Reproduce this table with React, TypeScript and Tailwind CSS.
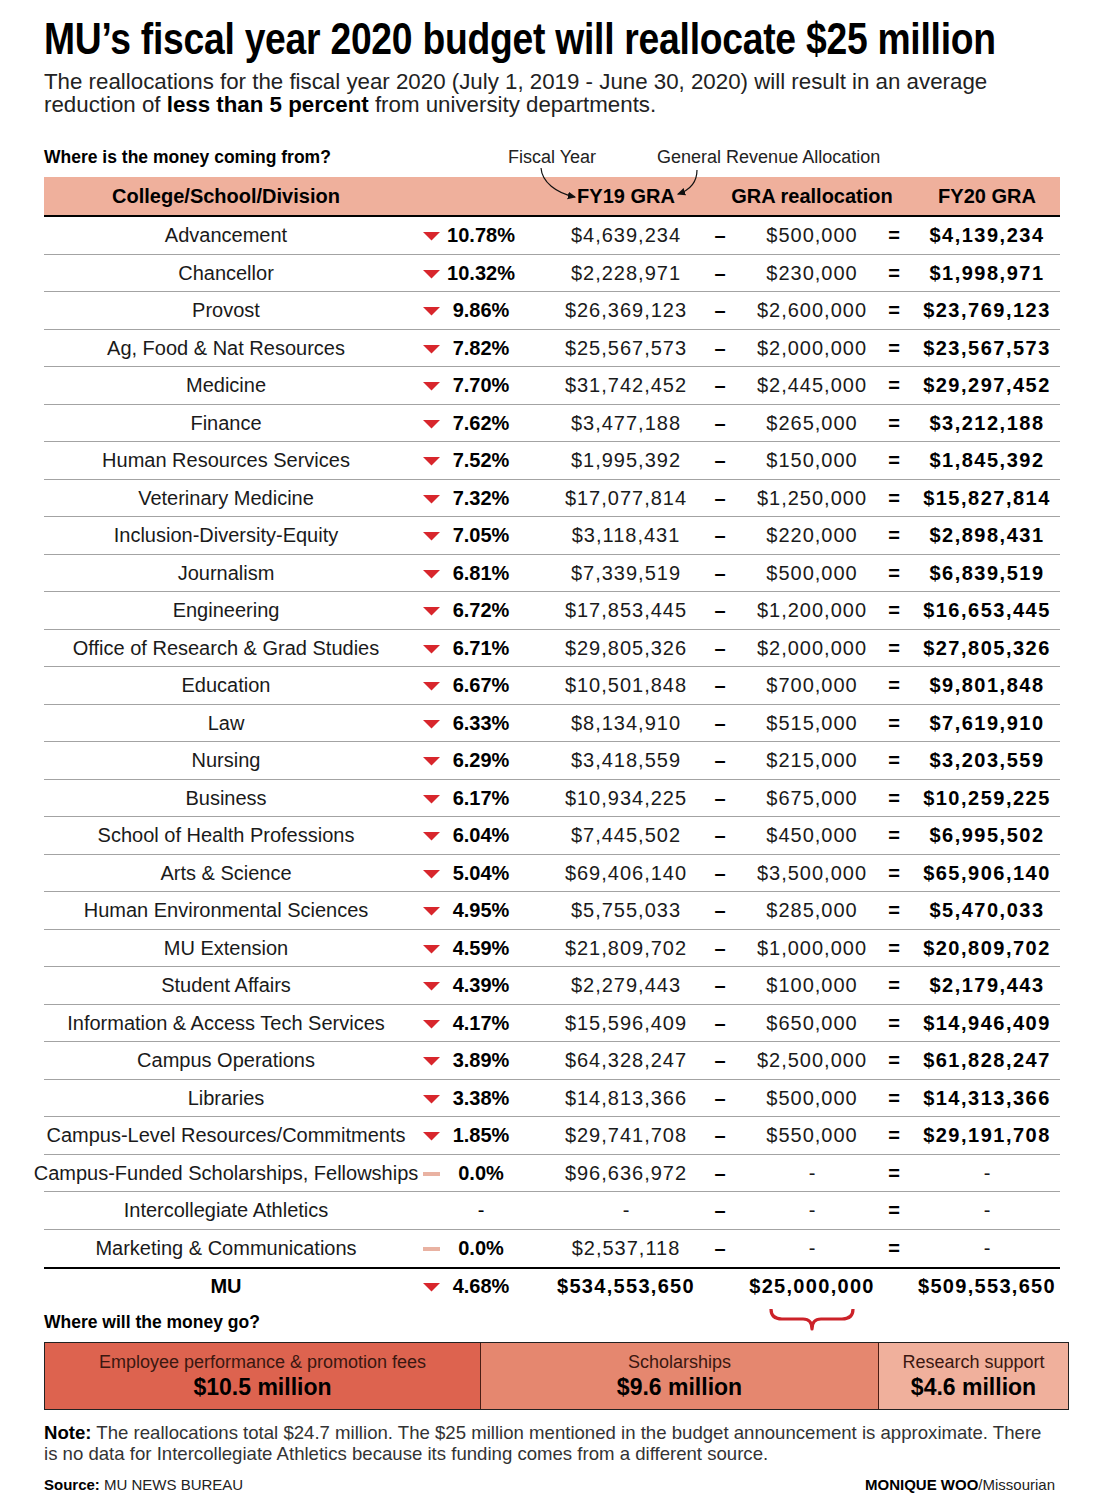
type Kind = 'down' | 'zero' | 'none';

const rows: [string, string, string, string, string, Kind][] = [
  ['Advancement', '10.78%', '$4,639,234', '$500,000', '$4,139,234', 'down'],
  ['Chancellor', '10.32%', '$2,228,971', '$230,000', '$1,998,971', 'down'],
  ['Provost', '9.86%', '$26,369,123', '$2,600,000', '$23,769,123', 'down'],
  ['Ag, Food & Nat Resources', '7.82%', '$25,567,573', '$2,000,000', '$23,567,573', 'down'],
  ['Medicine', '7.70%', '$31,742,452', '$2,445,000', '$29,297,452', 'down'],
  ['Finance', '7.62%', '$3,477,188', '$265,000', '$3,212,188', 'down'],
  ['Human Resources Services', '7.52%', '$1,995,392', '$150,000', '$1,845,392', 'down'],
  ['Veterinary Medicine', '7.32%', '$17,077,814', '$1,250,000', '$15,827,814', 'down'],
  ['Inclusion-Diversity-Equity', '7.05%', '$3,118,431', '$220,000', '$2,898,431', 'down'],
  ['Journalism', '6.81%', '$7,339,519', '$500,000', '$6,839,519', 'down'],
  ['Engineering', '6.72%', '$17,853,445', '$1,200,000', '$16,653,445', 'down'],
  ['Office of Research & Grad Studies', '6.71%', '$29,805,326', '$2,000,000', '$27,805,326', 'down'],
  ['Education', '6.67%', '$10,501,848', '$700,000', '$9,801,848', 'down'],
  ['Law', '6.33%', '$8,134,910', '$515,000', '$7,619,910', 'down'],
  ['Nursing', '6.29%', '$3,418,559', '$215,000', '$3,203,559', 'down'],
  ['Business', '6.17%', '$10,934,225', '$675,000', '$10,259,225', 'down'],
  ['School of Health Professions', '6.04%', '$7,445,502', '$450,000', '$6,995,502', 'down'],
  ['Arts & Science', '5.04%', '$69,406,140', '$3,500,000', '$65,906,140', 'down'],
  ['Human Environmental Sciences', '4.95%', '$5,755,033', '$285,000', '$5,470,033', 'down'],
  ['MU Extension', '4.59%', '$21,809,702', '$1,000,000', '$20,809,702', 'down'],
  ['Student Affairs', '4.39%', '$2,279,443', '$100,000', '$2,179,443', 'down'],
  ['Information & Access Tech Services', '4.17%', '$15,596,409', '$650,000', '$14,946,409', 'down'],
  ['Campus Operations', '3.89%', '$64,328,247', '$2,500,000', '$61,828,247', 'down'],
  ['Libraries', '3.38%', '$14,813,366', '$500,000', '$14,313,366', 'down'],
  ['Campus-Level Resources/Commitments', '1.85%', '$29,741,708', '$550,000', '$29,191,708', 'down'],
  ['Campus-Funded Scholarships, Fellowships', '0.0%', '$96,636,972', '-', '-', 'zero'],
  ['Intercollegiate Athletics', '-', '-', '-', '-', 'none'],
  ['Marketing & Communications', '0.0%', '$2,537,118', '-', '-', 'zero'],
];

const grid =
  'grid grid-cols-[364px_40px_66px_32px_160px_28px_10px_136px_28px_6px_146px]';
const cell = 'flex items-center justify-center whitespace-nowrap';

function Tri() {
  return (
    <svg width="17" height="9" viewBox="0 0 17 9" className="mt-[3px]">
      <path d="M0 0 L17 0 L8.5 8.5 Z" fill="#d8262c" />
    </svg>
  );
}

function Marker({ kind }: { kind: Kind }) {
  if (kind === 'down') return <Tri />;
  if (kind === 'zero') return <div className="mt-[2px] h-[4px] w-[17px] bg-[#e9b2a2]" />;
  return null;
}

export default function App() {
  return (
    <div
      className="h-[1512px] w-[1098px] overflow-hidden bg-white pl-[44px] text-[#1a1a1a]"
      style={{ fontFamily: '"Liberation Sans", Arial, sans-serif' }}
    >
      <div className="pt-[16px]">
        <h1 className="origin-left scale-x-[0.828] whitespace-nowrap text-[45px] font-bold leading-none tracking-[-0.3px] text-black">
          MU’s fiscal year 2020 budget will reallocate $25 million
        </h1>
      </div>
      <p className="mt-[9px] whitespace-nowrap text-[22.3px] leading-[23px] text-[#222]">
        The reallocations for the fiscal year 2020 (July 1, 2019 - June 30, 2020) will result in an average
        <br />
        reduction of <b className="font-bold text-black">less than 5 percent</b> from university departments.
      </p>

      {/* header block with annotation arrows */}
      <div className="relative mt-[31px] w-[1016px]">
        <div className="flex h-[20px] items-center whitespace-nowrap">
          <div className="w-[464px] text-[17.5px] font-bold text-black">Where is the money coming from?</div>
          <div className="text-[18px] text-[#222]">Fiscal Year</div>
          <div className="ml-[61px] text-[18px] text-[#222]">General Revenue Allocation</div>
        </div>
        <svg className="pointer-events-none absolute left-0 top-0" width="1016" height="60">
          <defs>
            <marker id="ah" markerWidth="8" markerHeight="8" refX="6" refY="4" orient="auto">
              <path d="M0 0.8 L7 4 L0 7.2 Z" fill="#111" />
            </marker>
          </defs>
          <path d="M497 21 C498 35 512 46 531 50" stroke="#111" strokeWidth="1.2" fill="none" markerEnd="url(#ah)" />
          <path d="M653 23 C653 36 646 43 634 47" stroke="#111" strokeWidth="1.2" fill="none" markerEnd="url(#ah)" />
        </svg>

        <div className={`${grid} mt-[10px] h-[40px] border-b-2 border-black bg-[#efb09c] text-[20px] font-bold text-black`}>
          <div className={cell}>College/School/Division</div>
          <div />
          <div />
          <div />
          <div className={cell}>FY19 GRA</div>
          <div />
          <div />
          <div className={cell}>GRA reallocation</div>
          <div />
          <div />
          <div className={cell}>FY20 GRA</div>
        </div>
      </div>

      {/* data rows */}
      <div className="w-[1016px] text-[20px]">
        {rows.map(([name, pct, fy19, re, fy20, kind], i) => (
          <div
            key={name}
            className={`${grid} h-[37.5px] ${i < rows.length - 1 ? 'border-b border-[#a3a3a3]' : ''}`}
          >
            <div className={cell}>{name}</div>
            <div className="flex items-center justify-end pr-[8px]">
              <Marker kind={kind} />
            </div>
            <div className={`${cell} ${pct === '-' ? 'font-normal' : 'font-bold'} text-black`}>{pct}</div>
            <div />
            <div className={`${cell} ${fy19 === '-' ? '' : 'tracking-[1px]'}`}>{fy19}</div>
            <div className={`${cell} font-bold text-black`}>–</div>
            <div />
            <div className={`${cell} ${re === '-' ? '' : 'tracking-[1px]'}`}>{re}</div>
            <div className={`${cell} font-bold text-black`}>=</div>
            <div />
            <div className={`${cell} ${fy20 === '-' ? 'font-normal' : 'font-bold tracking-[1.5px] text-black'}`}>{fy20}</div>
          </div>
        ))}
        <div className={`${grid} h-[36px] border-t-2 border-black font-bold text-black`}>
          <div className={cell}>MU</div>
          <div className="flex items-center justify-end pr-[8px]">
            <Tri />
          </div>
          <div className={cell}>4.68%</div>
          <div />
          <div className={`${cell} tracking-[1.3px]`}>$534,553,650</div>
          <div />
          <div />
          <div className={`${cell} tracking-[1.3px]`}>$25,000,000</div>
          <div />
          <div />
          <div className={`${cell} tracking-[1.3px]`}>$509,553,650</div>
        </div>
      </div>

      {/* where will the money go */}
      <div className="relative mt-[9px] w-[1016px]">
        <div className="flex h-[20px] items-center text-[17.5px] font-bold text-black">Where will the money go?</div>
        <svg className="absolute left-[725px] top-[-5px]" width="86" height="26" viewBox="0 0 86 26">
          <path
            d="M2 2 Q2 12 13 12 L34 12 Q43 12 43 22 Q43 12 52 12 L73 12 Q84 12 84 2"
            stroke="#cc2229"
            strokeWidth="3.2"
            fill="none"
            strokeLinejoin="round"
          />
        </svg>
      </div>

      <div className="mt-[10px] flex h-[68px] w-[1025px] border-[1.5px] border-[#222]">
        <div className="flex w-[436px] flex-col items-center justify-center border-r-[1.5px] border-[#4a1d14] bg-[#dd634f]">
          <div className="text-[18px] leading-[22px] text-[#3a1710]">Employee performance &amp; promotion fees</div>
          <div className="text-[23px] font-bold leading-[29px] text-black">$10.5 million</div>
        </div>
        <div className="flex w-[398px] flex-col items-center justify-center border-r-[1.5px] border-[#4a1d14] bg-[#e5876f]">
          <div className="text-[18px] leading-[22px] text-[#3a1710]">Scholarships</div>
          <div className="text-[23px] font-bold leading-[29px] text-black">$9.6 million</div>
        </div>
        <div className="flex flex-1 flex-col items-center justify-center bg-[#f0b09c]">
          <div className="text-[18px] leading-[22px] text-[#3a1710]">Research support</div>
          <div className="text-[23px] font-bold leading-[29px] text-black">$4.6 million</div>
        </div>
      </div>

      <p className="mt-[12px] whitespace-nowrap text-[18.6px] leading-[21px] text-[#333]">
        <b className="font-bold text-black">Note:</b> The reallocations total $24.7 million. The $25 million mentioned in the
        budget announcement is approximate. There
        <br />
        is no data for Intercollegiate Athletics because its funding comes from a different source.
      </p>

      <div className="mt-[12px] flex h-[18px] w-[1011px] items-center justify-between text-[15px] text-[#222]">
        <div>
          <b className="font-bold text-black">Source:</b> MU NEWS BUREAU
        </div>
        <div>
          <b className="font-bold text-black">MONIQUE WOO</b>/Missourian
        </div>
      </div>
    </div>
  );
}
